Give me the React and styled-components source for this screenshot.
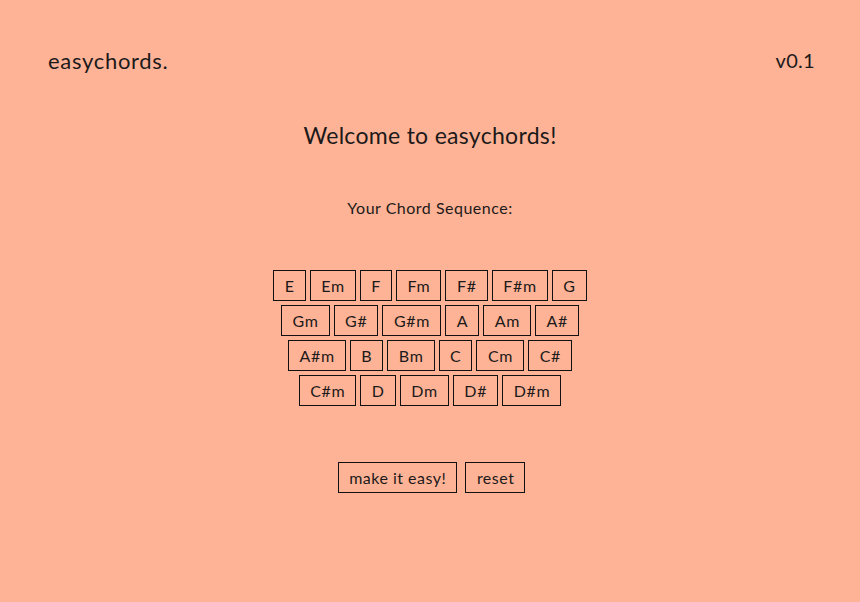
import React from 'react'
import styled, { createGlobalStyle } from 'styled-components'

const GlobalStyle = createGlobalStyle`
  html, body {
    margin: 0;
    padding: 0;
    background: #ffb396;
  }
  body {
    font-family: 'Lato', 'Open Sans', sans-serif;
    color: #1c1a1a;
  }
`

const chords = [
  'E', 'Em', 'F', 'Fm', 'F#', 'F#m', 'G', 'Gm', 'G#', 'G#m', 'A', 'Am', 'A#',
  'A#m', 'B', 'Bm', 'C', 'Cm', 'C#', 'C#m', 'D', 'Dm', 'D#', 'D#m',
]

export default function App() {
  return (
    <Page>
      <GlobalStyle />
      <Header>
        <Logo>easychords.</Logo>
        <Version>v0.1</Version>
      </Header>
      <Main>
        <Title>Welcome to easychords!</Title>
        <Subtitle>Your Chord Sequence:</Subtitle>
        <ChordGrid>
          {chords.map((c) => (
            <ChordButton key={c}>{c}</ChordButton>
          ))}
        </ChordGrid>
        <Actions>
          <ActionButton>make it easy!</ActionButton>
          <ActionButton>reset</ActionButton>
        </Actions>
      </Main>
    </Page>
  )
}

const Page = styled.div`
  width: 860px;
  height: 602px;
  background: #ffb396;
  box-sizing: border-box;
`

const Header = styled.header`
  display: flex;
  justify-content: space-between;
  align-items: center;
  padding: 46px 45px 0 48px;
  height: 28px;
`

const Logo = styled.div`
  font-size: 22px;
  letter-spacing: 0.7px;
`

const Version = styled.div`
  font-size: 20px;
  letter-spacing: 0.3px;
`

const Main = styled.main`
  display: flex;
  flex-direction: column;
  align-items: center;
`

const Title = styled.h1`
  margin: 47px 0 0;
  font-size: 23px;
  font-weight: 400;
  line-height: 28px;
  letter-spacing: 0.3px;
`

const Subtitle = styled.h2`
  margin: 49px 0 0;
  font-size: 16px;
  font-weight: 400;
  line-height: 20px;
  letter-spacing: 0.5px;
`

const ChordGrid = styled.div`
  width: 330px;
  margin-top: 52px;
  display: flex;
  flex-wrap: wrap;
  justify-content: center;
  gap: 4px 4px;
`

const ChordButton = styled.button`
  font-family: inherit;
  font-size: 16px;
  letter-spacing: 0.7px;
  color: #1c1a1a;
  background: transparent;
  border: 1px solid #111;
  height: 31px;
  padding: 0 10px 0 10.5px;
  cursor: pointer;
`

const Actions = styled.div`
  display: flex;
  gap: 8px;
  margin-top: 56px;
  margin-left: 3px;
`

const ActionButton = styled(ChordButton)`
  letter-spacing: 0.5px;
`
